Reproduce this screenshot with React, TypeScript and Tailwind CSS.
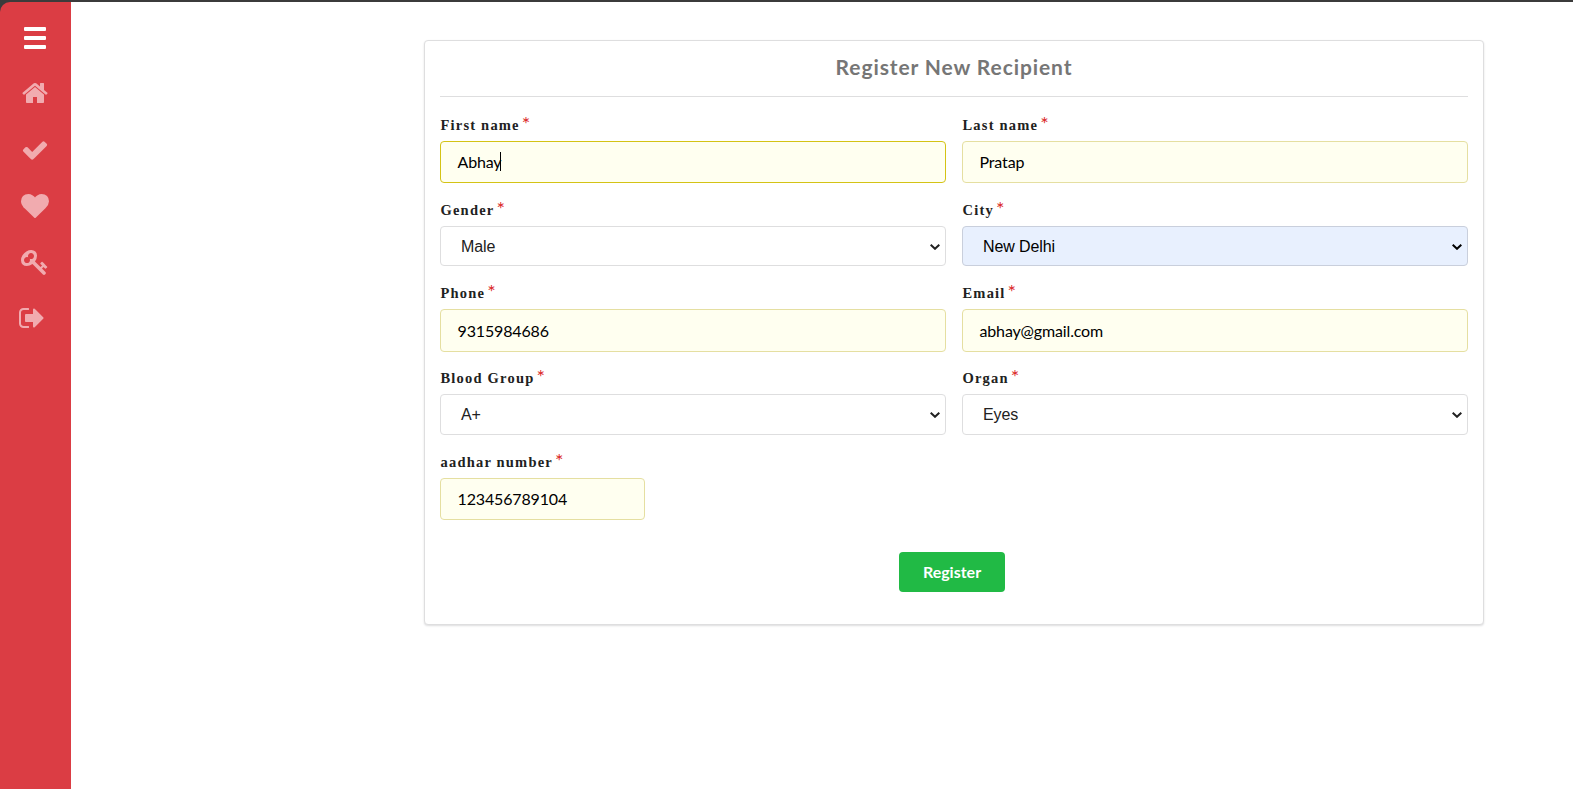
import React from "react";

const icons = [
  {
    name: "Home",
    cls: "ml-[21px]",
    d: "M1472 992v480q0 26-19 45t-45 19h-384v-384h-256v384h-384q-26 0-45-19t-19-45v-480q0-1 .5-3t.5-3l575-474 575 474q1 2 1 6zm223-69l-62 74q-8 9-21 11h-3q-13 0-21-7l-692-577-692 577q-12 8-24 7-13-2-21-11l-62-74q-8-10-7-23.5t11-21.5l719-599q32-26 76-26t76 26l244 204v-195q0-14 9-23t23-9h192q14 0 23 9t9 23v408l219 182q10 8 11 21.5t-7 23.5z",
  },
  {
    name: "Approve",
    cls: "mt-px ml-[21px]",
    d: "M1671 566q0 40-28 68l-724 724-136 136q-28 28-68 28t-68-28l-136-136-362-362q-28-28-28-68t28-68l136-136q28-28 68-28t68 28l294 295 656-657q28-28 68-28t68 28l136 136q28 28 28 68z",
  },
  {
    name: "Donors",
    cls: "ml-[21px]",
    d: "M896 1664q-26 0-44-18l-624-602q-10-8-27.5-26t-55.5-65.5-68-97.5-53.5-121-23.5-138q0-220 127-344t351-124q62 0 126.5 21.5t120 58 95.5 68.5 76 68q36-36 76-68t95.5-68.5 120-58 126.5-21.5q224 0 351 124t127 344q0 221-229 450l-623 600q-18 18-44 18z",
  },
  {
    name: "Password",
    cls: "ml-[21px]",
    d: "M832 512q0-80-56-136t-136-56-136 56-56 136q0 42 19 83-41-19-83-19-80 0-136 56t-56 136 56 136 136 56 136-56 56-136q0-42-19-83 41 19 83 19 80 0 136-56t56-136zm851 704q0 17-49 66t-66 49q-9 0-28.5-16t-36.5-33-38.5-40-24.5-26l-96 96 220 220q28 28 28 68 0 42-39 81t-81 39q-40 0-68-28l-671-671q-176 131-365 131-163 0-265.5-102.5t-102.5-265.5q0-160 95-313t248-248 313-95q163 0 265.5 102.5t102.5 265.5q0 189-131 365l355 355 96-96q-3-3-26-24.5t-40-38.5-33-36.5-16-28.5q0-17 49-66t66-49q13 0 23 10 6 6 46 44.5t82 79.5 86.5 86 73 78 28.5 41z",
  },
  {
    name: "Sign out",
    cls: "ml-[18px]",
    d: "M704 1440q0 4 1 20t.5 26.5-3 23.5-10 19.5-20.5 6.5h-320q-119 0-203.5-84.5t-84.5-203.5v-704q0-119 84.5-203.5t203.5-84.5h320q13 0 22.5 9.5t9.5 22.5q0 4 1 20t.5 26.5-3 23.5-10 19.5-20.5 6.5h-320q-66 0-113 47t-47 113v704q0 66 47 113t113 47h312l11.5 1 11.5 3 8 5.5 7 9 2 13.5zm928-544q0 26-19 45l-544 544q-19 19-45 19t-45-19-19-45v-288h-448q-26 0-45-19t-19-45v-384q0-26 19-45t45-19h448v-288q0-26 19-45t45-19 45 19l544 544q19 19 19 45z",
  },
];

function Sidebar() {
  return (
    <nav className="flex w-[71px] shrink-0 flex-col rounded-tl-[10px] bg-[#db3d44] pt-[25px]">
      <div className="ml-6 flex h-[22px] w-[22px] flex-col justify-between">
        <span className="h-1 rounded-[1px] bg-white" />
        <span className="h-1 rounded-[1px] bg-white" />
        <span className="h-1 rounded-[1px] bg-white" />
      </div>
      <div className="mt-[30px] flex flex-col gap-7">
        {icons.map((icon) => (
          <svg
            key={icon.name}
            viewBox="0 0 1792 1792"
            className={`size-7 fill-[#f1abaf] ${icon.cls}`}
          >
            <path d={icon.d} />
          </svg>
        ))}
      </div>
    </nav>
  );
}

function Field({ label, children }: { label: string; children: React.ReactNode }) {
  return (
    <div className="min-w-0 flex-1">
      <div className="flex h-[26px] pl-[0.5px] font-['Liberation_Serif',serif] text-[14.5px] leading-[20px] font-bold tracking-[1.2px] text-[#212121]">
        <span>{label}</span>
        <span className="-mt-[2px] ml-[2px] font-['Lato',sans-serif] text-[20px] font-normal text-[#db2828]">*</span>
      </div>
      {children}
    </div>
  );
}

function Input({ value, className, caret }: { value: string; className: string; caret?: boolean }) {
  return (
    <div className={`flex items-center rounded border bg-[#fffff0] pl-[16.5px] text-[16px] tracking-[-0.15px] text-black ${className}`}>
      <span>{value}</span>
      {caret && <span className="mb-[2px] -ml-px h-[19px] w-px bg-black" />}
    </div>
  );
}

function Select({ value, className }: { value: string; className: string }) {
  return (
    <div
      className={`flex items-center justify-between rounded border pr-[5px] pl-5 font-['Liberation_Sans',sans-serif] text-[16px] tracking-[-0.1px] ${className}`}
    >
      <span>{value}</span>
      <svg viewBox="0 0 10 6" className="h-[6px] w-[10px] fill-none stroke-current stroke-2">
        <path d="M.7.8 5 4.8 9.3.8" />
      </svg>
    </div>
  );
}

export default function App() {
  return (
    <div className="flex h-[789px] w-[1573px] flex-col overflow-hidden bg-white font-['Lato',sans-serif]">
      <div className="h-[2px] shrink-0 bg-[#3b3b3b]" />
      <div className="flex flex-1 bg-[linear-gradient(to_right,#3b3b3b_20px,#fff_20px)]">
        <Sidebar />
        <main className="flex-1 bg-white pt-[38px] pl-[353px]">
          <section className="h-[585px] w-[1060px] rounded border border-[#dededf] bg-white px-[15px] shadow-[0_1px_2px_0_rgba(34,36,38,0.15)]">
            <h1 className="flex h-[56px] items-center justify-center border-b border-[#dededf] pb-[3px] text-[21px] font-bold tracking-[0.9px] text-[#767676]">
              Register New Recipient
            </h1>
            <form className="pt-[18px]">
              <div className="flex gap-4">
                <Field label="First name">
                  <Input value="Abhay" caret className="h-[42px] border-[#d4c315]" />
                </Field>
                <Field label="Last name">
                  <Input value="Pratap" className="h-[42px] border-[#e5dfa1]" />
                </Field>
              </div>
              <div className="mt-[17px] flex gap-4">
                <Field label="Gender">
                  <Select value="Male" className="h-10 border-[#dededf] pt-px text-[#212121]" />
                </Field>
                <Field label="City">
                  <Select value="New Delhi" className="h-10 border-[#c9cfdc] bg-[#e8f0fe] pt-px text-black" />
                </Field>
              </div>
              <div className="mt-[17px] flex gap-4">
                <Field label="Phone">
                  <Input value="9315984686" className="h-[43px] border-[#e5dfa1]" />
                </Field>
                <Field label="Email">
                  <Input value="abhay@gmail.com" className="h-[43px] border-[#e5dfa1]" />
                </Field>
              </div>
              <div className="mt-4 flex gap-4">
                <Field label="Blood Group">
                  <Select value="A+" className="h-[41px] border-[#dededf] text-[#212121]" />
                </Field>
                <Field label="Organ">
                  <Select value="Eyes" className="h-[41px] border-[#dededf] text-[#212121]" />
                </Field>
              </div>
              <div className="mt-[17px] flex w-[205px]">
                <Field label="aadhar number">
                  <Input value="123456789104" className="h-[42px] border-[#e5dfa1]" />
                </Field>
              </div>
              <button
                type="button"
                className="mt-8 ml-[459px] block h-10 w-[106px] rounded bg-[#21ba45] text-[16px] font-bold text-white"
              >
                Register
              </button>
            </form>
          </section>
        </main>
      </div>
    </div>
  );
}
